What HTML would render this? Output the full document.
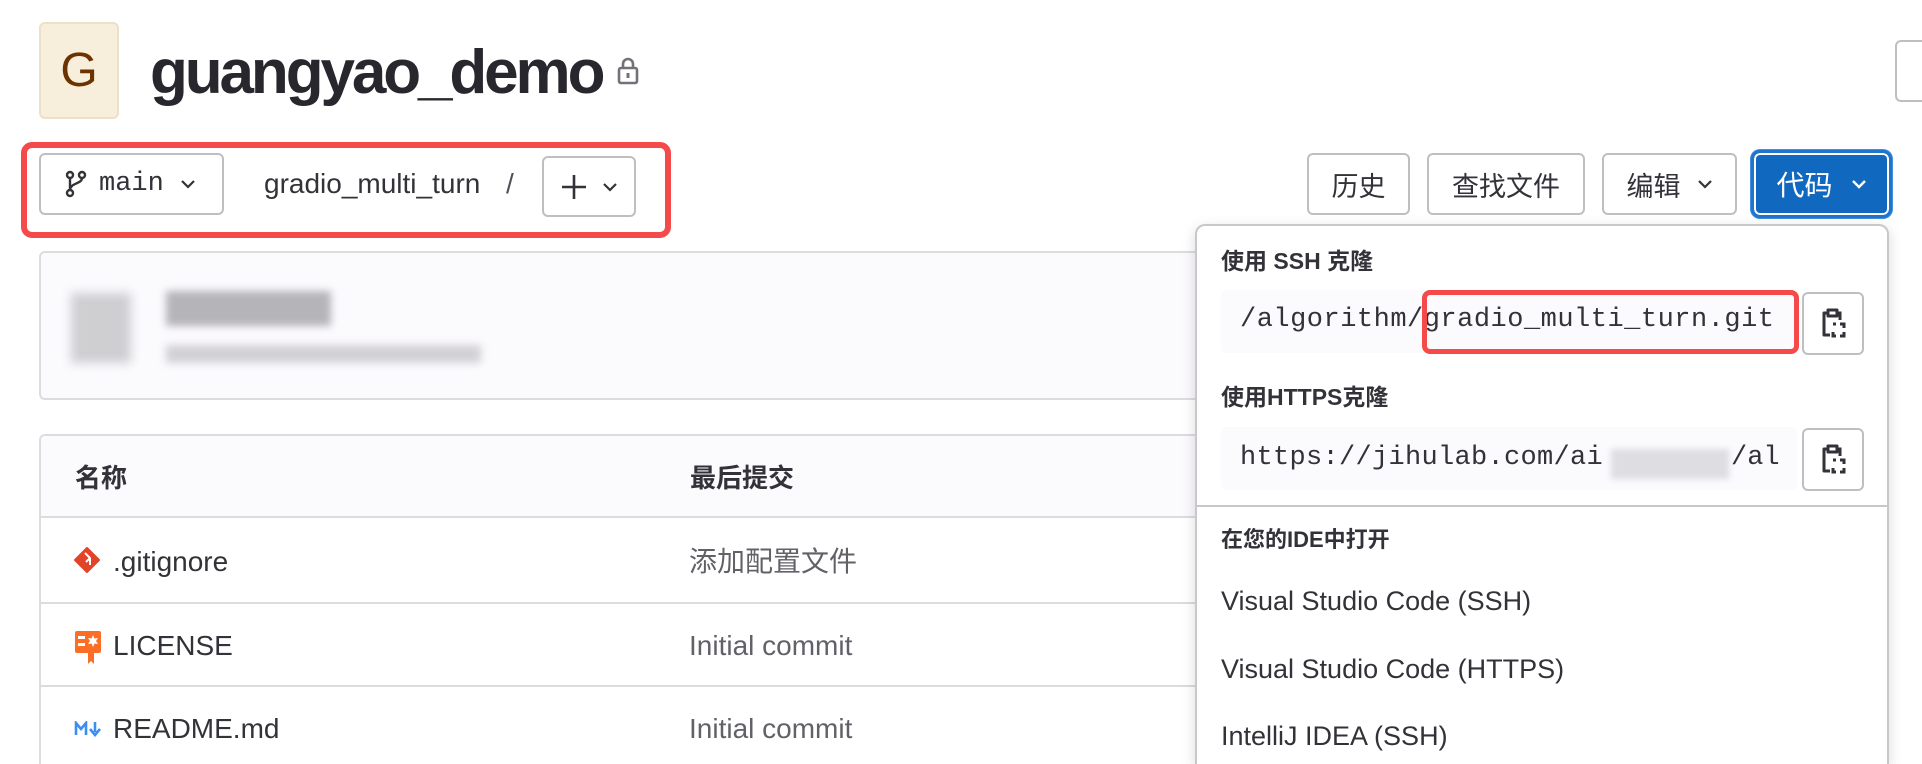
<!DOCTYPE html>
<html><head><meta charset="utf-8">
<style>
*{box-sizing:border-box;margin:0;padding:0}
html,body{width:1922px;height:764px;overflow:hidden}
body{background:#fff;font-family:"Liberation Sans","Noto Sans CJK SC",sans-serif;color:#333238}
#w{position:relative;width:1922px;height:764px;overflow:hidden}
.abs{position:absolute}
.btn{position:absolute;border:2px solid #bfbfc3;border-radius:6px;background:#fff;display:flex;align-items:center;justify-content:center;font-size:27px;color:#333238}
.mono{font-family:"Liberation Mono","Noto Sans CJK SC",monospace}
.t{position:absolute;white-space:nowrap;line-height:1}
</style></head><body><div id="w">

<div class="abs" style="left:39px;top:22px;width:80px;height:97px;background:#f8eedc;border:2px solid #ece0c8;border-radius:6px;display:flex;align-items:center;justify-content:center;font-size:48px;color:#6b3300">G</div>
<div class="t" style="left:150px;top:42px;font-size:62px;font-weight:bold;letter-spacing:-3.1px;color:#28272d">guangyao_demo</div>
<svg class="abs" style="left:616px;top:56px" width="24" height="30" viewBox="0 0 24 30"><rect x="3" y="12" width="18" height="15" rx="2" fill="none" stroke="#737278" stroke-width="2.6"/><path d="M7 12V8a5 5 0 0 1 10 0v4" fill="none" stroke="#737278" stroke-width="2.6"/><rect x="10.5" y="17" width="3" height="5" fill="#737278"/></svg>
<div class="abs" style="left:1895px;top:40px;width:40px;height:62px;border:2px solid #bfbfc3;border-radius:6px"></div>

<div class="abs" style="left:21px;top:142px;width:650px;height:96px;border:6px solid #f44a4a;border-radius:11px"></div>
<div class="btn" style="left:39px;top:153px;width:185px;height:62px;justify-content:flex-start;padding-left:24px">
<svg width="22" height="28" viewBox="0 0 22 28"><circle cx="5" cy="5" r="3" fill="none" stroke="#333238" stroke-width="2.4"/><circle cx="5" cy="23" r="3" fill="none" stroke="#333238" stroke-width="2.4"/><circle cx="17" cy="5" r="3" fill="none" stroke="#333238" stroke-width="2.4"/><path d="M5 8v12M17 8c0 6-12 5-12 12" fill="none" stroke="#333238" stroke-width="2.4"/></svg>
<span class="mono" style="margin-left:12px;font-size:27px">main</span>
<svg style="margin-left:16px" width="16" height="10" viewBox="0 0 16 10"><path d="M2 2l6 6 6-6" fill="none" stroke="#333238" stroke-width="2.2"/></svg></div>
<div class="t" style="left:264px;top:170px;font-size:28px">gradio_multi_turn</div>
<div class="t" style="left:506px;top:170px;font-size:28px;color:#535158">/</div>
<div class="btn" style="left:542px;top:156px;width:94px;height:61px">
<svg width="28" height="28" viewBox="0 0 28 28"><path d="M14 2v24M2 14h24" stroke="#333238" stroke-width="2.6"/></svg>
<svg style="margin-left:14px" width="16" height="10" viewBox="0 0 16 10"><path d="M2 2l6 6 6-6" fill="none" stroke="#333238" stroke-width="2.2"/></svg></div>

<div class="btn" style="left:1307px;top:153px;width:103px;height:62px">历史</div>
<div class="btn" style="left:1427px;top:153px;width:158px;height:62px">查找文件</div>
<div class="btn" style="left:1602px;top:153px;width:135px;height:62px">编辑<svg style="margin-left:16px" width="16" height="10" viewBox="0 0 16 10"><path d="M2 2l6 6 6-6" fill="none" stroke="#333238" stroke-width="2.2"/></svg></div>
<div class="btn" style="left:1751px;top:150px;width:141px;height:68px;background:#1068bf;border:3px solid #1f75cb;border-radius:9px;box-shadow:inset 0 0 0 2px #fff,0 0 0 1px #428fdc;color:#fff;font-size:28px">代码<svg style="margin-left:18px" width="16" height="10" viewBox="0 0 16 10"><path d="M2 2l6 6 6-6" fill="none" stroke="#fff" stroke-width="2.4"/></svg></div>

<div class="abs" style="left:39px;top:251px;width:1820px;height:149px;background:#fbfafd;border:2px solid #dcdcde;border-radius:6px;overflow:hidden">
<div class="abs" style="left:30px;top:40px;width:60px;height:70px;background:#cfcfd2;filter:blur(5px)"></div>
<div class="abs" style="left:125px;top:38px;width:165px;height:35px;background:#b5b4b8;filter:blur(4px)"></div>
<div class="abs" style="left:125px;top:92px;width:315px;height:18px;background:#d2d1d5;filter:blur(4px)"></div>
</div>

<div class="abs" style="left:39px;top:434px;width:1820px;height:330px;border:2px solid #dcdcde;border-bottom:none;border-radius:6px 6px 0 0;overflow:hidden">
<div class="abs" style="left:0;top:0;width:100%;height:82px;background:#fbfafd;border-bottom:2px solid #dcdcde"></div>
<div class="t" style="left:34px;top:29px;font-size:26px;font-weight:bold">名称</div>
<div class="t" style="left:649px;top:29px;font-size:26px;font-weight:bold">最后提交</div>
<div class="abs" style="left:0;top:166px;width:100%;height:2px;background:#dcdcde"></div>
<div class="abs" style="left:0;top:249px;width:100%;height:2px;background:#dcdcde"></div>
</div>
<svg class="abs" style="left:74px;top:547px" width="28" height="26" viewBox="0 0 28 26"><path d="M13 1l12 12-12 12L1 13z" fill="#e24329" stroke="#e24329" stroke-width="2" stroke-linejoin="round"/><path d="M11 6l5 5v7M16 11l-4 4" fill="none" stroke="#fff" stroke-width="2"/></svg>
<div class="t" style="left:113px;top:548px;font-size:28px">.gitignore</div>
<div class="t" style="left:689px;top:548px;font-size:28px;color:#626168">添加配置文件</div>
<svg class="abs" style="left:74px;top:630px" width="28" height="38" viewBox="0 0 28 38"><rect x="1" y="1" width="26" height="22" rx="2" fill="#fc6d26"/><rect x="4" y="6" width="7" height="3" fill="#fff"/><rect x="4" y="13" width="7" height="3" fill="#fff"/><path d="M19 5l1.5 3.5 3.5-.5-2 3 2 3-3.5-.5L19 17l-1.5-3.5-3.5.5 2-3-2-3 3.5.5z" fill="#fff"/><path d="M14 23v11l3-3 3 3V23" fill="#fc6d26"/></svg>
<div class="t" style="left:113px;top:632px;font-size:28px">LICENSE</div>
<div class="t" style="left:689px;top:632px;font-size:28px;color:#626168">Initial commit</div>
<svg class="abs" style="left:74px;top:721px" width="28" height="16" viewBox="0 0 28 16"><path d="M2 14V2l5 6 5-6v12" fill="none" stroke="#3c8ff0" stroke-width="2.6"/><path d="M21 1v10M16 8l5 6 5-6" fill="none" stroke="#3c8ff0" stroke-width="2.6"/></svg>
<div class="t" style="left:113px;top:715px;font-size:28px">README.md</div>
<div class="t" style="left:689px;top:715px;font-size:28px;color:#626168">Initial commit</div>

<div class="abs" style="left:1195px;top:224px;width:694px;height:540px;background:#fff;border:2px solid #c8c7cc;border-bottom:none;border-radius:10px 10px 0 0;box-shadow:0 4px 14px rgba(0,0,0,.15)">
<div class="t" style="left:24px;top:24px;font-size:23px;font-weight:bold">使用 SSH 克隆</div>
<div class="abs" style="left:24px;top:64px;width:576px;height:63px;background:#fbfafd;border-radius:6px;overflow:hidden"><div class="t mono" style="left:19px;top:17px;font-size:27px;letter-spacing:.5px">/algorithm/gradio_multi_turn.git</div></div>
<div class="abs" style="left:225px;top:64px;width:377px;height:64px;border:5px solid #f44a4a;border-radius:8px"></div>
<div class="btn" style="left:605px;top:66px;width:62px;height:63px"><svg width="28" height="34" viewBox="0 0 28 34"><path d="M9 6H5v22h6" fill="none" stroke="#333238" stroke-width="3" stroke-linejoin="round"/><path d="M9 3h9v6H9z" fill="none" stroke="#333238" stroke-width="3" stroke-linejoin="round"/><path d="M18 6h3v7" fill="none" stroke="#333238" stroke-width="3"/><path d="M14 17h3M21 17h4v4M25 25v4h-4M17 29h-3v-4" fill="none" stroke="#333238" stroke-width="3"/></svg></div>
<div class="t" style="left:24px;top:160px;font-size:23px;font-weight:bold">使用HTTPS克隆</div>
<div class="abs" style="left:24px;top:201px;width:576px;height:63px;background:#fbfafd;border-radius:6px;overflow:hidden"><div class="t mono" style="left:19px;top:18px;font-size:27px;letter-spacing:.3px">https://jihulab.com/ai</div><div class="abs" style="left:390px;top:22px;width:118px;height:30px;background:#dedde1;filter:blur(3px)"></div><div class="t mono" style="left:510px;top:18px;font-size:27px">/al</div></div>
<div class="btn" style="left:605px;top:202px;width:62px;height:63px"><svg width="28" height="34" viewBox="0 0 28 34"><path d="M9 6H5v22h6" fill="none" stroke="#333238" stroke-width="3" stroke-linejoin="round"/><path d="M9 3h9v6H9z" fill="none" stroke="#333238" stroke-width="3" stroke-linejoin="round"/><path d="M18 6h3v7" fill="none" stroke="#333238" stroke-width="3"/><path d="M14 17h3M21 17h4v4M25 25v4h-4M17 29h-3v-4" fill="none" stroke="#333238" stroke-width="3"/></svg></div>
<div class="abs" style="left:0;top:279px;width:100%;height:2px;background:#c8c7cc"></div>
<div class="t" style="left:24px;top:303px;font-size:22px;font-weight:bold">在您的IDE中打开</div>
<div class="t" style="left:24px;top:362px;font-size:27px">Visual Studio Code (SSH)</div>
<div class="t" style="left:24px;top:430px;font-size:27px">Visual Studio Code (HTTPS)</div>
<div class="t" style="left:24px;top:497px;font-size:27px">IntelliJ IDEA (SSH)</div>
</div>
</div></body></html>
